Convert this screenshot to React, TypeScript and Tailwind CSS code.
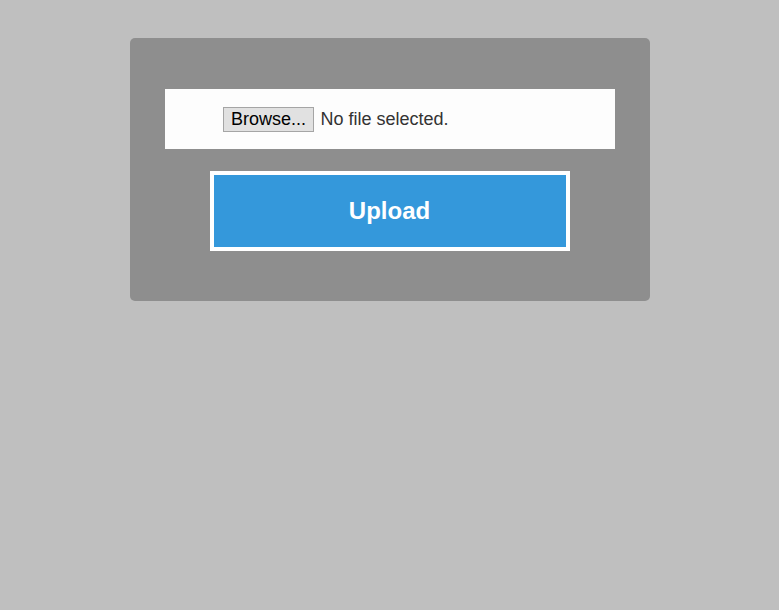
export default function App() {
  return (
    <div className="min-h-[610px] w-full bg-[#bfbfbf] pt-[38px]" style={{ fontFamily: '"Liberation Sans", Arial, sans-serif' }}>
      {/* upload card */}
      <div className="mx-auto w-[520px] rounded-[5px] bg-[#8e8e8e] px-[35px] pt-[51px] pb-[50px]">
        <div className="flex h-[60px] w-[450px] items-center bg-[#fdfdfd] pl-[58px]">
          <button className="h-[25px] w-[91px] border border-[#a5a5a5] bg-[#e1e1e1] pl-px text-[18px] leading-none text-black">
            Browse...
          </button>
          <span className="ml-[7px] text-[18px] leading-none text-[#333]">No file selected.</span>
        </div>

        <button className="mx-auto mt-[22px] flex h-[80px] w-[360px] items-center justify-center border-4 border-white bg-[#3498db] text-[24px] font-bold text-white">
          Upload
        </button>
      </div>
    </div>
  );
}
